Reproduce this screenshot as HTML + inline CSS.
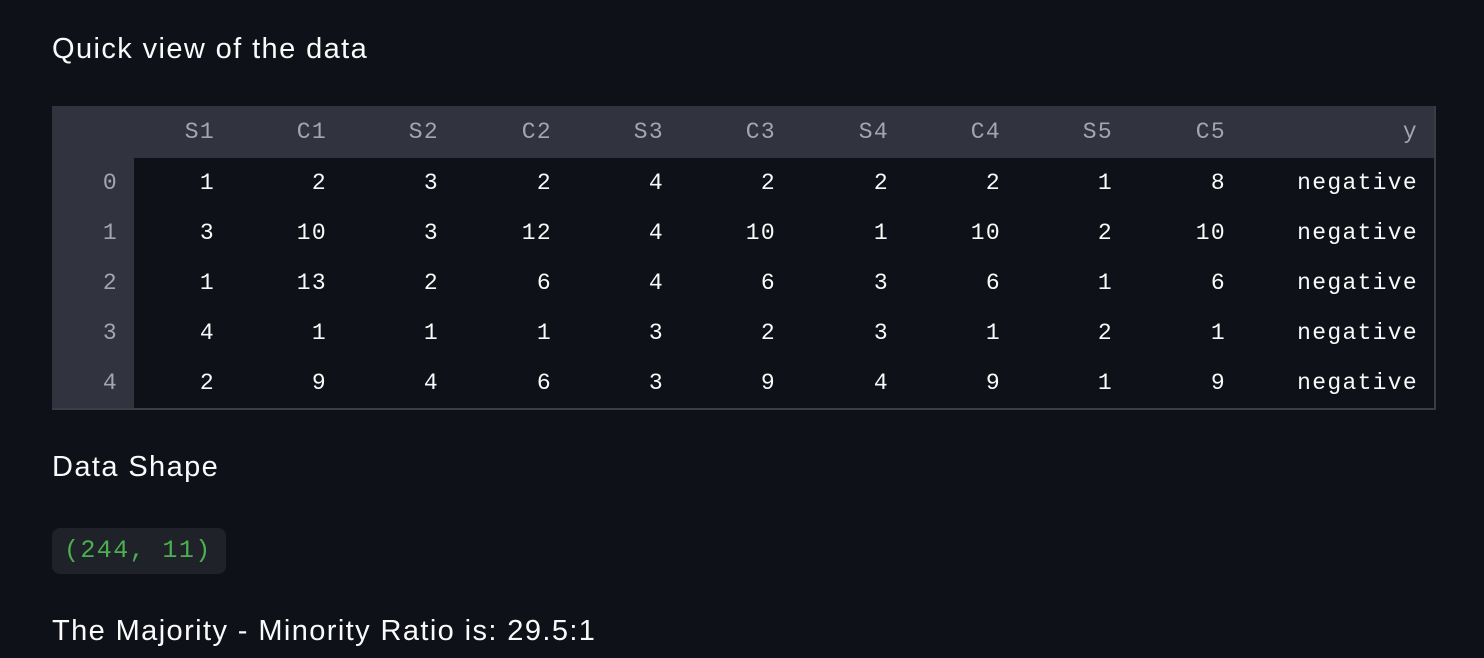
<!DOCTYPE html>
<html><head><style>
body{margin:0;background:#0e1117;width:1484px;height:658px;overflow:hidden;color:#fafafa;font-family:"Liberation Sans",sans-serif}
.h{position:absolute;left:52px;font-size:29px;line-height:34px;letter-spacing:1.4px}
table{position:absolute;left:52px;top:106px;border-collapse:collapse;table-layout:fixed;width:1384px;font-family:"Liberation Mono",monospace;font-size:23px;letter-spacing:1.3px;border-right:2px solid #3a3c48;border-bottom:2px solid #3a3c48}
td,th{padding:0 16px 0 0;text-align:right;font-weight:normal;height:50px;white-space:nowrap}
th{color:#a3a6ae;background:#31333f;height:52px}
tr td:first-child{background:#31333f;color:#a3a6ae}
.code{position:absolute;left:52px;top:528px;width:174px;height:46px;background:#1f2229;border-radius:8px;font-family:"Liberation Mono",monospace;font-size:25px;letter-spacing:1.4px;color:#4caf50;line-height:46px;text-indent:12px}
</style></head><body>
<div class="h" style="top:32px">Quick view of the data</div>
<table>
<colgroup><col style="width:82px"><col style="width:97px"><col style="width:112px"><col style="width:112px"><col style="width:113px"><col style="width:112px"><col style="width:112px"><col style="width:113px"><col style="width:112px"><col style="width:112px"><col style="width:113px"><col></colgroup>
<tr><th></th><th>S1</th><th>C1</th><th>S2</th><th>C2</th><th>S3</th><th>C3</th><th>S4</th><th>C4</th><th>S5</th><th>C5</th><th>y</th></tr>
<tr><td>0</td><td>1</td><td>2</td><td>3</td><td>2</td><td>4</td><td>2</td><td>2</td><td>2</td><td>1</td><td>8</td><td>negative</td></tr>
<tr><td>1</td><td>3</td><td>10</td><td>3</td><td>12</td><td>4</td><td>10</td><td>1</td><td>10</td><td>2</td><td>10</td><td>negative</td></tr>
<tr><td>2</td><td>1</td><td>13</td><td>2</td><td>6</td><td>4</td><td>6</td><td>3</td><td>6</td><td>1</td><td>6</td><td>negative</td></tr>
<tr><td>3</td><td>4</td><td>1</td><td>1</td><td>1</td><td>3</td><td>2</td><td>3</td><td>1</td><td>2</td><td>1</td><td>negative</td></tr>
<tr><td>4</td><td>2</td><td>9</td><td>4</td><td>6</td><td>3</td><td>9</td><td>4</td><td>9</td><td>1</td><td>9</td><td>negative</td></tr>
</table>
<div class="h" style="top:450px">Data Shape</div>
<div class="code">(244, 11)</div>
<div class="h" style="top:614px">The Majority - Minority Ratio is: 29.5:1</div>
</body></html>
